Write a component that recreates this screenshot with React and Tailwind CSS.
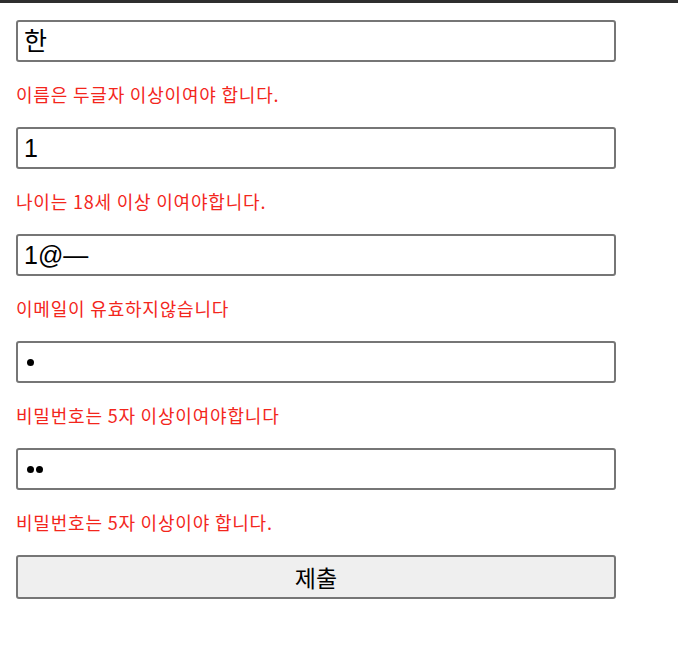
import React from "react";

const fields = [
  { value: "한", error: "이름은 두글자 이상이여야 합니다." },
  { value: "1", error: "나이는 18세 이상 이여야합니다." },
  { value: "1@—", error: "이메일이 유효하지않습니다" },
  { value: "•", error: "비밀번호는 5자 이상이여야합니다", pw: true },
  { value: "••", error: "비밀번호는 5자 이상이야 합니다.", pw: true },
];

export default function App() {
  return (
    <div className="min-h-[660px] w-[678px] bg-white">
      <div className="h-[3px] bg-[#2e2e2e]" />
      <form className="flex flex-col pl-4 pt-[17px]" onSubmit={(e) => e.preventDefault()}>
        {fields.map((f, i) => (
          <div key={i} className="flex flex-col">
            <div
              className="flex h-[42px] w-[600px] items-center rounded-[3px] border-2 border-[#767676] bg-white px-[6px] text-[24px] text-black"
              style={{ fontFamily: '"Liberation Sans", "Noto Sans CJK KR", sans-serif' }}
            >
              {f.pw ? (
                <span className="ml-[3px] flex gap-[2px]">
                  {f.value.split("").map((_, j) => (
                    <span key={j} className="inline-block h-[7px] w-[7px] rounded-full bg-black" />
                  ))}
                </span>
              ) : (
                <span className="text-[25px] leading-none">{f.value}</span>
              )}
            </div>
            <div
              className="flex h-[65px] items-center text-[18px] tracking-[0.8px] text-[#f3261c]"
              style={{ fontFamily: '"Noto Sans CJK KR", sans-serif' }}
            >
              {f.error}
            </div>
          </div>
        ))}
        <button
          type="submit"
          className="h-[44px] w-[600px] rounded-[3px] border-2 border-[#767676] bg-[#efefef] text-[23px] text-black"
          style={{ fontFamily: '"Noto Sans CJK KR", sans-serif' }}
        >
          제출
        </button>
      </form>
    </div>
  );
}
